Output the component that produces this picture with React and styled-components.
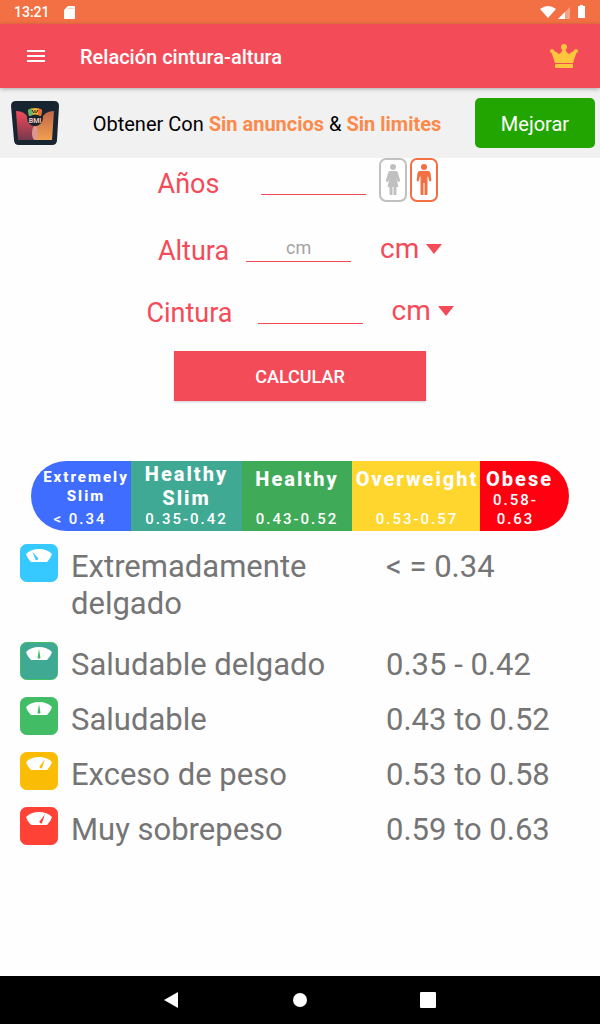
import React, { useState } from 'react';
import styled, { createGlobalStyle } from 'styled-components';

const GlobalStyle = createGlobalStyle`
  * {
    box-sizing: border-box;
  }

  body {
    background: #fefefe;
    font-family: Roboto, sans-serif;
    margin: 0;
  }

  button,
  input,
  select {
    font-family: inherit;
  }
`;

// Styled components.
const Page = styled.div`
  display: flex;
  flex-direction: column;
  min-height: 100vh;
`;

const StatusBar = styled.div`
  align-items: center;
  background: #f27043;
  color: white;
  display: flex;
  font-size: 14px;
  font-weight: 500;
  gap: 14px;
  height: 24px;
  padding: 0 14px;
`;

const StatusIcons = styled.div`
  align-items: center;
  display: flex;
  margin-left: auto;
`;

const AppBar = styled.header`
  align-items: center;
  background: #f44b59;
  box-shadow: 0 1px 4px rgba(0, 0, 0, 0.3);
  display: flex;
  height: 64px;
  padding: 0 20px 0 24px;
  position: relative;
`;

const IconButton = styled.button`
  background: none;
  border: 0;
  display: flex;
  padding: 0;
`;

const Title = styled.h1`
  color: white;
  flex: 1;
  font-size: 20px;
  font-weight: 500;
  line-height: 24px;
  margin: 2px 0 0 32px;
`;

const Promo = styled.section`
  align-items: center;
  background: #f1f1f1;
  display: flex;
  height: 70px;
  padding: 0 5px 0 11px;
`;

const PromoText = styled.p`
  color: black;
  flex: 1;
  font-size: 20px;
  line-height: 24px;
  margin: 2px 0 0;
  text-align: center;
`;

const Highlight = styled.strong`
  color: #fb8a4c;
  font-weight: 700;
`;

const UpgradeButton = styled.button`
  background: #22a500;
  border: 0;
  border-radius: 5px;
  color: white;
  font-size: 20px;
  height: 50px;
  padding: 2px 0 0;
  width: 120px;
`;

const Main = styled.main`
  flex: 1;
`;

const Form = styled.form`
  align-items: center;
  display: flex;
  flex-direction: column;
`;

const Field = styled.div`
  align-items: center;
  display: flex;
  height: ${({ $height }) => $height}px;
  margin-bottom: ${({ $space }) => $space}px;
`;

const Label = styled.label`
  color: #f44b59;
  font-size: 27px;
  line-height: 36px;
  margin-right: ${({ $gap }) => $gap}px;
  padding-top: 8px;
`;

const TextInput = styled.input`
  background: transparent;
  border: 0;
  border-bottom: 1px solid #f44b59;
  border-radius: 0;
  color: #444;
  font-size: 18px;
  height: 30px;
  margin-right: ${({ $gap }) => $gap}px;
  outline: 0;
  padding: 2px 0 0;
  text-align: center;
  width: 105px;

  &::placeholder {
    color: #a3a3a3;
  }
`;

const GenderGroup = styled.div`
  display: flex;
  gap: 3px;
  margin-right: 4px;
`;

const GenderButton = styled.button`
  align-items: center;
  background: white;
  border: 2px solid ${({ $active }) => ($active ? '#f27043' : '#c0c0c0')};
  border-radius: 7px;
  color: ${({ $active }) => ($active ? '#f27043' : '#c0c0c0')};
  display: flex;
  height: 44px;
  justify-content: center;
  padding: 0;
  width: 28px;
`;

const UnitBox = styled.div`
  align-items: center;
  display: flex;
  position: relative;
`;

const UnitSelect = styled.select`
  appearance: none;
  background: transparent;
  border: 0;
  color: #f44b59;
  font-size: 28px;
  height: 40px;
  outline: 0;
  padding: 2px 22px 0 0;
`;

const Caret = styled.svg`
  pointer-events: none;
  position: absolute;
  right: 0;
  top: 17px;
`;

const SubmitButton = styled.button`
  background: #f44b59;
  border: 0;
  box-shadow: 0 1px 2px rgba(0, 0, 0, 0.2);
  color: white;
  font-size: 18px;
  font-weight: 500;
  height: 50px;
  padding: 0;
  width: 252px;
`;

const Scale = styled.div`
  border-radius: 35px;
  display: grid;
  grid-template-columns:
    minmax(0, 100fr) minmax(0, 111fr) minmax(0, 110fr)
    minmax(0, 128fr) minmax(0, 89fr);
  height: 70px;
  margin: 60px 31px 0;
  overflow: hidden;
`;

const Segment = styled.div`
  align-items: center;
  background: ${({ $color }) => $color};
  color: white;
  display: flex;
  flex-direction: column;
  justify-content: space-between;
  letter-spacing: 2px;
  padding: ${({ $pad }) => $pad};
  text-align: center;
`;

const SegmentName = styled.strong`
  font-size: ${({ $small }) => ($small ? 15 : 20)}px;
  font-weight: 800;
  line-height: ${({ $small }) => ($small ? 19 : 24)}px;
`;

const SegmentRange = styled.span`
  font-size: 15px;
  font-weight: 500;
  line-height: 19px;
  padding-right: ${({ $end }) => $end || 0}px;
`;

const RangeTable = styled.table`
  border-collapse: collapse;
  color: #757575;
  font-size: 31px;
  line-height: 37px;
  margin: 13px 20px 0;
  table-layout: fixed;
  width: calc(100% - 40px);
`;

const RangeRow = styled.tr`
  height: ${({ $tall }) => ($tall ? 98 : 55)}px;
  vertical-align: top;
`;

const IconCell = styled.td`
  padding: 0;
  width: 51px;

  svg {
    display: block;
  }
`;

const NameCell = styled.th`
  font-weight: 400;
  padding: 4px 50px 0 0;
  text-align: left;
  width: 315px;
`;

const RangeCell = styled.td`
  padding: 4px 0 0;
`;

const NavBar = styled.nav`
  align-items: center;
  background: black;
  display: flex;
  gap: 104px;
  height: 48px;
  justify-content: center;
`;

// Data.
const SEGMENTS = [
  {
    name: 'Extremely Slim', range: '< 0.34', color: '#3f6dff', pad: '7px 0 3px 10px', end: 12, small: true,
  },
  {
    name: 'Healthy Slim', range: '0.35-0.42', color: '#3fa994', pad: '1px 0 3px 0',
  },
  {
    name: 'Healthy', range: '0.43-0.52', color: '#3faa58', pad: '6px 0 3px 0',
  },
  {
    name: 'Overweight', range: '0.53-0.57', color: '#ffd62e', pad: '6px 0 3px 2px',
  },
  {
    name: 'Obese', range: '0.58-0.63', color: '#ff0010', pad: '6px 10px 3px 0', end: 8,
  },
];

const RANGES = [
  {
    name: 'Extremadamente delgado', range: '< = 0.34', color: '#36c9ff', angle: -32, tall: true,
  },
  {
    name: 'Saludable delgado', range: '0.35 - 0.42', color: '#3fa994', angle: 0, edge: '#3fbf62',
  },
  {
    name: 'Saludable', range: '0.43 to 0.52', color: '#42bd66', angle: 0,
  },
  {
    name: 'Exceso de peso', range: '0.53 to 0.58', color: '#fbbc05', angle: 28,
  },
  {
    name: 'Muy sobrepeso', range: '0.59 to 0.63', color: '#ff4136', angle: 28,
  },
];

const Logo = () => (
  <svg width="48" height="44" viewBox="0 0 48 44" aria-hidden="true">
    <defs>
      <linearGradient id="logo-left" x1="0" y1="0" x2="0" y2="1">
        <stop offset="0" stopColor="#f44b59" />
        <stop offset="1" stopColor="#74394c" />
      </linearGradient>
      <linearGradient id="logo-right" x1="0" y1="0" x2="0" y2="1">
        <stop offset="0" stopColor="#c0664a" />
        <stop offset="1" stopColor="#f0a050" />
      </linearGradient>
    </defs>
    <path d="M5 0h38q5 0 5 5l-2 34q0 5-5 5H8q-5 0-5-5L0 5q0-5 5-5z" fill="#182430" />
    <path d="M5 10q9 0 12 7 2 7 7 8v14H7z" fill="url(#logo-left)" />
    <path d="M43 10q-9 0-12 7-2 7-7 8v14h17z" fill="url(#logo-right)" />
    <ellipse cx="24" cy="32" rx="3" ry="7" fill="#dc988f" />
    <circle cx="24" cy="17" r="8" fill="#182430" />
    <path d="M17 9q7-4 14 0l-1 6q-6-3-12 0z" fill="#f5b52e" />
    <path d="M17 9l4-2 1 7-4 1z" fill="#65b86a" />
    <path d="M27 7l4 2-1 6-3-1z" fill="#ef6c3b" />
    <path d="M21 9l2 3M24 12V9M27 9l-2 3" stroke="#182430" />
    <text x="24" y="22" fill="#f3c6b4" fontSize="7" fontWeight="700" textAnchor="middle">BMI</text>
  </svg>
);

const Woman = () => (
  <svg width="16" height="32" viewBox="0 0 16 32" fill="currentColor" aria-hidden="true">
    <circle cx="8" cy="3" r="3" />
    <path d="M5 7h6q1.500 0 2 2l2 7q0 2-1 2-1 0-1.500-1L11.500 14l2 9H11.500v7q0 1-1 1H8.500v-8h-1v8H5.500q-1 0-1-1v-7H2.500l2-9L3.500 17q-.5 1-1.500 1-1 0-1-2l2-7q.5-2 2-2z" />
  </svg>
);

const Man = () => (
  <svg width="16" height="32" viewBox="0 0 16 32" fill="currentColor" aria-hidden="true">
    <circle cx="8" cy="3" r="3" />
    <path d="M4 7h8q2 0 2.500 2l.8 7q0 1.500-1 1.500-1 0-1.300-1.500L12 12l-.5 1v17q0 1-1 1H8.500V19h-1v12H5.500q-1 0-1-1V13L4 12l-1 4q-.3 1.500-1.300 1.500-1 0-1-1.500l.8-7Q2 7 4 7z" />
  </svg>
);

const ScaleIcon = ({ angle, color, edge }) => (
  <svg width="38" height="38" viewBox="0 0 38 38" aria-hidden="true">
    <rect x="0.5" y="0.5" width="37" height="37" rx="6" fill={color} stroke={edge || color} />
    <path d="M6 10q5-5 13-5t13 5q-1 4-5 8H11q-4-4-5-8z" fill="white" />
    <path d="M19 7l1.500 9q-1.500 1.500-3 0z" fill={edge || color} transform={`translate(${angle / 8} 0) rotate(${angle} 19 12)`} />
  </svg>
);

const UnitPicker = ({ label }) => (
  <UnitBox>
    <UnitSelect aria-label={label} defaultValue="cm">
      <option>cm</option>
      <option>in</option>
    </UnitSelect>
    <Caret width="16" height="10" viewBox="0 0 16 10">
      <path d="M0 0h16L8 10z" fill="#f44b59" />
    </Caret>
  </UnitBox>
);

const App = () => {
  const [gender, setGender] = useState('male');

  return (
    <Page>
      <GlobalStyle />
      <StatusBar>
        <span>13:21</span>
        <svg width="12" height="14" viewBox="0 0 12 14" fill="white" aria-hidden="true">
          <path d="M4 1h6q1 0 1 1v11q0 1-1 1H1q-1 0-1-1V5z" />
          <path d="M5 3v1M7 3v1M9 3v1" stroke="#f27043" opacity="0.6" />
        </svg>
        <StatusIcons>
          <svg width="46" height="14" viewBox="0 0 46 14" fill="white" aria-hidden="true">
            <path d="M0 4q8-6 16 0L8 13z" />
            <path d="M30 2v12H18z" opacity="0.35" />
            <path d="M25 7v7h-7z" />
            <path d="M38 1h2V0h3v1h2v12h-7z" />
          </svg>
        </StatusIcons>
      </StatusBar>
      <AppBar>
        <IconButton type="button" aria-label="Menú">
          <svg width="24" height="24" viewBox="0 0 24 24" fill="white">
            <path d="M3 6h18v2H3zM3 11h18v2H3zM3 16h18v2H3z" />
          </svg>
        </IconButton>
        <Title>Relación cintura-altura</Title>
        <IconButton type="button" aria-label="Premium">
          <svg width="32" height="26" viewBox="0 0 32 26" fill="#ffc53d">
            <circle cx="16" cy="4" r="3" />
            <circle cx="4" cy="8" r="2" />
            <circle cx="28" cy="8" r="2" />
            <path d="M3 8l2-1 6 4q3-1 4-6h2q1 5 4 6l6-4 2 1-4 12H7z" />
            <rect x="7" y="21" width="18" height="4" rx="1" />
          </svg>
        </IconButton>
      </AppBar>
      <Promo>
        <Logo />
        <PromoText>
          Obtener Con <Highlight>Sin anuncios</Highlight> &amp; <Highlight>Sin limites</Highlight>
        </PromoText>
        <UpgradeButton type="button">Mejorar</UpgradeButton>
      </Promo>
      <Main>
        <Form onSubmit={(event) => event.preventDefault()}>
          <Field $height={44} $space={21}>
            <Label htmlFor="age" $gap={42}>Años</Label>
            <TextInput id="age" $gap={13} />
            <GenderGroup>
              <GenderButton
                type="button"
                aria-label="Mujer"
                $active={gender === 'female'}
                onClick={() => setGender('female')}
              >
                <Woman />
              </GenderButton>
              <GenderButton
                type="button"
                aria-label="Hombre"
                $active={gender === 'male'}
                onClick={() => setGender('male')}
              >
                <Man />
              </GenderButton>
            </GenderGroup>
          </Field>
          <Field $height={48} $space={14}>
            <Label htmlFor="height" $gap={17}>Altura</Label>
            <TextInput id="height" placeholder="cm" $gap={29} />
            <UnitPicker label="Unidad de altura" />
          </Field>
          <Field $height={48} $space={18}>
            <Label htmlFor="waist" $gap={25}>Cintura</Label>
            <TextInput id="waist" $gap={29} />
            <UnitPicker label="Unidad de cintura" />
          </Field>
          <SubmitButton type="submit">CALCULAR</SubmitButton>
        </Form>
        <Scale>
          {SEGMENTS.map((item) => (
            <Segment key={item.name} $color={item.color} $pad={item.pad}>
              <SegmentName $small={item.small}>{item.name}</SegmentName>
              <SegmentRange $end={item.end}>{item.range}</SegmentRange>
            </Segment>
          ))}
        </Scale>
        <RangeTable>
          <tbody>
            {RANGES.map((item) => (
              <RangeRow key={item.name} $tall={item.tall}>
                <IconCell>
                  <ScaleIcon angle={item.angle} color={item.color} edge={item.edge} />
                </IconCell>
                <NameCell scope="row">{item.name}</NameCell>
                <RangeCell>{item.range}</RangeCell>
              </RangeRow>
            ))}
          </tbody>
        </RangeTable>
      </Main>
      <NavBar>
        <IconButton type="button" aria-label="Atrás">
          <svg width="24" height="24" viewBox="0 0 24 24" fill="white"><path d="M4 12l14-8v16z" /></svg>
        </IconButton>
        <IconButton type="button" aria-label="Inicio">
          <svg width="24" height="24" viewBox="0 0 24 24" fill="white"><circle cx="12" cy="12" r="7" /></svg>
        </IconButton>
        <IconButton type="button" aria-label="Recientes">
          <svg width="24" height="24" viewBox="0 0 24 24" fill="white"><rect x="4" y="4" width="16" height="16" rx="1" /></svg>
        </IconButton>
      </NavBar>
    </Page>
  );
};

export default App;
